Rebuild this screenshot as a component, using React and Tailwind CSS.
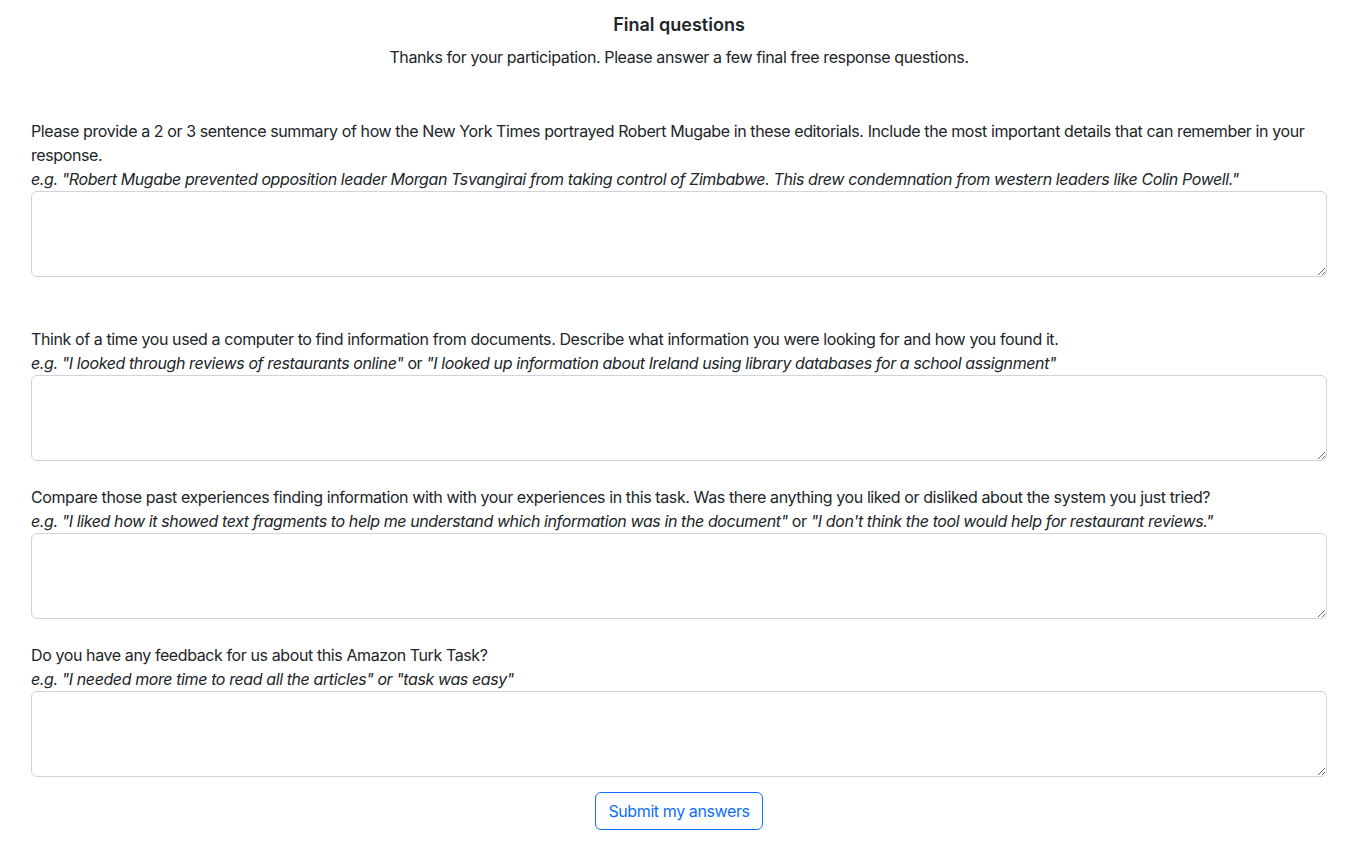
const questions = [
  {
    id: "summary",
    label:
      "Please provide a 2 or 3 sentence summary of how the New York Times portrayed Robert Mugabe in these editorials. Include the most important details that can remember in your response.",
    example: [
      { italic: true, text: "e.g. \"Robert Mugabe prevented opposition leader Morgan Tsvangirai from taking control of Zimbabwe. This drew condemnation from western leaders like Colin Powell.\"" },
    ],
    gap: "mt-[50px]",
  },
  {
    id: "past",
    label:
      "Think of a time you used a computer to find information from documents. Describe what information you were looking for and how you found it.",
    example: [
      { italic: true, text: "e.g. \"I looked through reviews of restaurants online\"" },
      { italic: false, text: " or " },
      { italic: true, text: "\"I looked up information about Ireland using library databases for a school assignment\"" },
    ],
    gap: "mt-[50px]",
  },
  {
    id: "compare",
    label:
      "Compare those past experiences finding information with with your experiences in this task. Was there anything you liked or disliked about the system you just tried?",
    example: [
      { italic: true, text: "e.g. \"I liked how it showed text fragments to help me understand which information was in the document\"" },
      { italic: false, text: " or " },
      { italic: true, text: "\"I don't think the tool would help for restaurant reviews.\"" },
    ],
    gap: "mt-6",
  },
  {
    id: "feedback",
    label: "Do you have any feedback for us about this Amazon Turk Task?",
    example: [
      { italic: true, text: "e.g. \"I needed more time to read all the articles\" or \"task was easy\"" },
    ],
    gap: "mt-6",
  },
];

const App = () => {
  return (
    <div className="min-h-screen bg-white px-[31px] pt-[14px] pb-8 text-[16px] leading-6 tracking-[-0.4px] text-[#212529] font-['Inter','Liberation_Sans',sans-serif]">
      <h5 className="text-center text-[18px] leading-[22px] tracking-normal font-semibold mb-[9px]">Final questions</h5>
      <p className="text-center">
        Thanks for your participation. Please answer a few final free response questions.
      </p>

      {questions.map((q) => (
        <div key={q.id} className={q.gap}>
          <label htmlFor={q.id} className="block">
            {q.label}
          </label>
          <div>
            {q.example.map((part, i) => (
              <span key={i} className={part.italic ? "italic" : ""}>
                {part.text}
              </span>
            ))}
          </div>
          <textarea
            id={q.id}
            rows={3}
            className="block w-full h-[86px] px-3 py-1.5 border border-[#ced4da] rounded-[6px] bg-white text-[16px] leading-6 outline-none"
          />
        </div>
      ))}

      <div className="flex justify-center mt-[15px]">
        <button className="h-[38px] px-3 border border-[#0d6efd] text-[#0d6efd] rounded-[6px] bg-white">
          Submit my answers
        </button>
      </div>
    </div>
  );
};

export default App;
